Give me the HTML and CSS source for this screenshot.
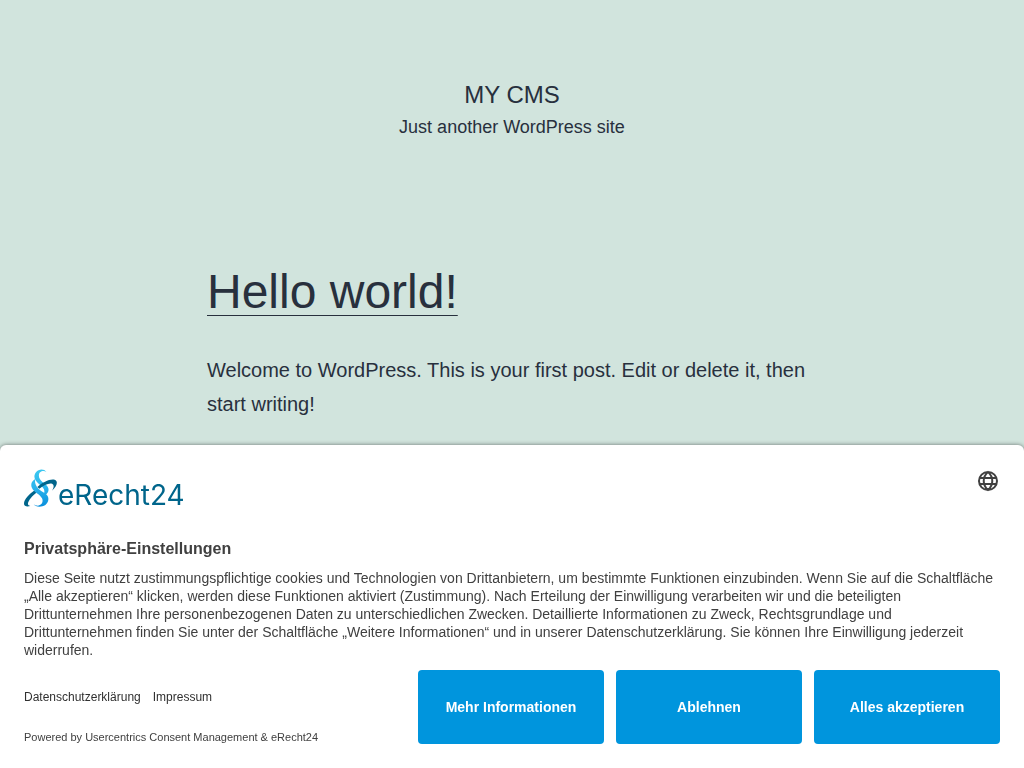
FILE: index.html
```html
<!DOCTYPE html>
<html lang="de">
    <head>
        <meta charset="UTF-8">
        <meta name="viewport" content="width=device-width, initial-scale=1.0">
        <title>My CMS</title>
        <link rel="stylesheet" href="styles.css">
    </head>

    <body>
        <header class="site-header">
            <h1 class="site-title">My CMS</h1>
            <p class="site-description">Just another WordPress site</p>
        </header>

        <main class="site-main">
            <article class="post">
                <h2 class="entry-title"><a href="#">Hello world!</a></h2>
                <p>Welcome to WordPress. This is your first post. Edit or delete it, then start writing!</p>
            </article>
        </main>

        <section class="consent" role="dialog" aria-labelledby="consent-title">
            <div class="consent-top">
                <div class="logo">
                    <svg class="logo-mark" viewBox="24 26 102 117" aria-hidden="true">
                        <defs>
                            <linearGradient id="sign" x1="0" y1="27" x2="0" y2="138" gradientUnits="userSpaceOnUse">
                                <stop offset="0" stop-color="#3cc8f0"/>
                                <stop offset="0.5" stop-color="#2bb4ec"/>
                                <stop offset="1" stop-color="#0a8fdc"/>
                            </linearGradient>
                        </defs>
                        <path fill="#00658b" d="M61 97C49 106 38 119 36 128C35 133 37 136 43 137C33 140 24 138 24 130C24 117 40 101 56 90Z"/>
                        <path fill="url(#sign)" d="M91 35C85 25 68 25 60 36C50 49 57 61 68 70C79 79 86 84 85 94C85 101 82 105 78 109C90 105 100 96 97 84C94 73 79 68 72 57C66 47 68 36 77 33C82 31 87 32 91 35Z"/>
                        <path fill="url(#sign)" d="M58 56C47 62 43 72 48 83C53 95 72 102 78 114C83 125 77 135 66 136C60 136 56 134 53 131C57 138 68 141 79 138C93 134 100 121 96 109C91 97 71 93 63 80C57 71 56 64 58 56Z"/>
                        <path fill="#00658b" d="M64 80C80 65 103 54 116 58C127 62 124 77 108 91C114 82 115 73 108 70C99 67 82 75 70 85Z"/>
                    </svg>
                    <span class="logo-text">eRecht24</span>
                </div>
                <button class="language" type="button" aria-label="Sprache wählen">
                    <svg viewBox="0 0 24 24" aria-hidden="true">
                        <path fill="none" stroke="currentColor" stroke-width="2" d="M12 3a9 9 0 1 0 0 18a9 9 0 0 0 0-18zM12 3c-5.700 5-5.700 13 0 18c5.700-5 5.700-13 0-18zM4 9h16M4 15h16"/>
                    </svg>
                </button>
            </div>

            <h2 class="consent-title" id="consent-title">Privatsphäre-Einstellungen</h2>
            <p class="consent-text">Diese Seite nutzt zustimmungspflichtige cookies und Technologien von Drittanbietern, um bestimmte Funktionen einzubinden. Wenn Sie auf die Schaltfläche „Alle akzeptieren“ klicken, werden diese Funktionen aktiviert (Zustimmung). Nach Erteilung der Einwilligung verarbeiten wir und die beteiligten Drittunternehmen Ihre personenbezogenen Daten zu unterschiedlichen Zwecken. Detaillierte Informationen zu Zweck, Rechtsgrundlage und Drittunternehmen finden Sie unter der Schaltfläche „Weitere Informationen“ und in unserer Datenschutzerklärung. Sie können Ihre Einwilligung jederzeit widerrufen.</p>

            <div class="consent-footer">
                <div class="consent-info">
                    <nav class="consent-links">
                        <a href="#">Datenschutzerklärung</a>
                        <a href="#">Impressum</a>
                    </nav>
                    <p class="powered">Powered by Usercentrics Consent Management &amp; eRecht24</p>
                </div>
                <button class="btn" type="button">Mehr Informationen</button>
                <button class="btn" type="button">Ablehnen</button>
                <button class="btn" type="button">Alles akzeptieren</button>
            </div>
        </section>
    </body>

</html>
```
FILE: styles.css
```css
* {
    margin: 0;
    padding: 0;
    box-sizing: border-box;
}

body {
    min-height: 100vh;
    background: #d1e4dd;
    color: #28303d;
    font-family: 'Liberation Sans', Arial, sans-serif;
}

.site-header {
    padding: 80px 24px 0;
    text-align: center;
}

.site-title {
    font-size: 24px;
    font-weight: normal;
    line-height: 30px;
    text-transform: uppercase;
}

.site-description {
    font-size: 18px;
    line-height: 34px;
}

.site-main {
    max-width: 610px;
    margin: 0 auto;
    padding-top: 116px;
}

.entry-title {
    margin-bottom: 29px;
    font-size: 48px;
    font-weight: normal;
    line-height: 64px;

    & a {
        color: inherit;
        text-decoration: underline;
        text-decoration-thickness: 1px;
        text-decoration-skip-ink: none;
        text-underline-offset: 7px;
    }
}

.post p {
    font-size: 20px;
    line-height: 34px;
}

/* consent banner, lies over the bottom of the page */
.consent {
    position: fixed;
    left: 0;
    right: 0;
    bottom: 0;
    padding: 24px;
    background: white;
    border-radius: 6px 6px 0 0;
    box-shadow: 0 0 4px rgba(0, 0, 0, 0.5);
    color: #404040;
}

.consent-top {
    display: flex;
    justify-content: space-between;
    align-items: flex-start;
    height: 71px;
}

.logo {
    display: flex;
    align-items: flex-start;
}

.logo-mark {
    width: 34px;
    height: 39px;
}

.logo-text {
    padding-top: 8px;
    color: #00658b;
    font-family: 'Inter', sans-serif;
    font-size: 28px;
    line-height: 36px;
}

.language {
    width: 24px;
    height: 24px;
    border: none;
    background: transparent;
    color: #404040;
    cursor: pointer;

    & svg {
        display: block;
    }
}

.consent-title {
    margin-bottom: 11px;
    font-size: 16px;
    line-height: 18px;
}

.consent-text {
    margin-bottom: 11px;
    font-size: 14px;
    line-height: 18px;
}

.consent-footer {
    display: grid;
    grid-template-columns: 1fr repeat(3, 186px);
    gap: 12px;
    min-height: 74px;
}

.consent-info {
    display: flex;
    flex-direction: column;
    justify-content: flex-end;
    gap: 26px;
}

.consent-links {
    display: flex;
    gap: 12px;
    font-size: 12px;

    & a {
        color: #303030;
        text-decoration: none;
    }
}

.powered {
    font-size: 11px;
    line-height: 14px;
}

.btn {
    border: none;
    border-radius: 4px;
    background: #0095dd;
    color: white;
    font-family: inherit;
    font-size: 14px;
    font-weight: bold;
    cursor: pointer;
}
```
